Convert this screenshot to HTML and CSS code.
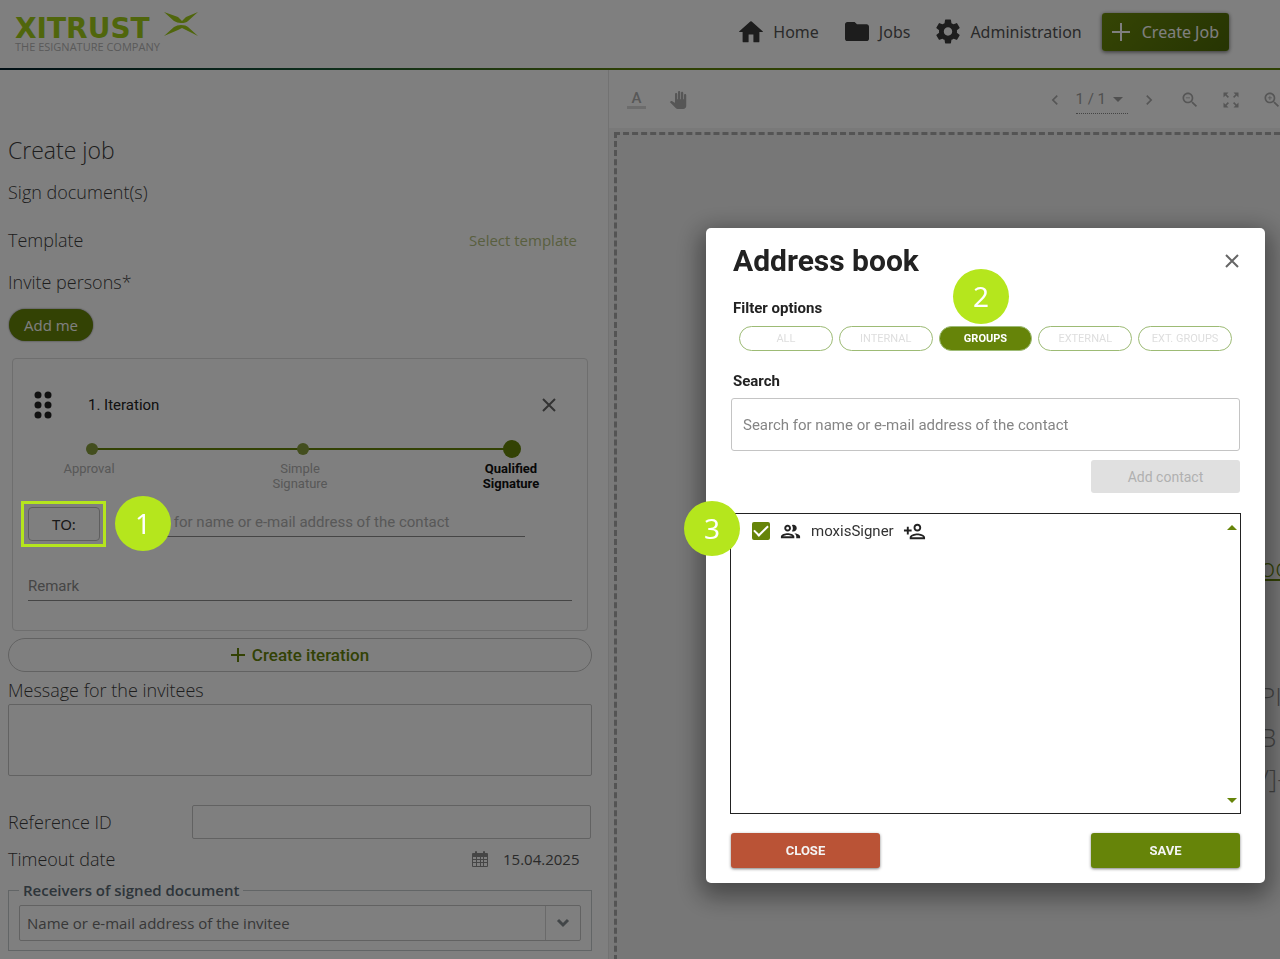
FILE: index.html
```html
<!DOCTYPE html>
<html lang="en">
<head>
    <meta charset="UTF-8">
    <meta name="viewport" content="width=device-width, initial-scale=1.0">
    <title>Create job - Address book</title>
    <link rel="stylesheet" href="styles.css">
</head>
<body>
    <header>
        <a href="#" class="logo">
            <span class="logo-name">XITRUST</span>
            <svg class="logo-mark" viewBox="0 0 34 24" aria-hidden="true">
                <path d="M0 0 L14 5 L18 9 L22 5 L34 0 L24 9 Q22 11 17 11 Q13 11 10 9 Z"/>
                <path d="M0 24 L10 15 Q13 13 17 13 Q22 13 24 15 L34 24 L22 18 L18 16 L14 18 Z"/>
            </svg>
            <span class="logo-claim">THE ESIGNATURE COMPANY</span>
        </a>
        <nav>
            <a href="#" class="nav-home">
                <svg viewBox="2 2 20 19"><path d="M10 20v-6h4v6q0 .5.5.5h3.800q.7 0 .7-.7V12h2.500q.8-.1.200-.700L12.600 3.200q-.6-.5-1.200 0L2.300 11.300q-.6.6.2.700H5v7.800q0 .7.7.7h3.800q.5 0 .5-.5z"/></svg>
                Home
            </a>
            <a href="#" class="nav-jobs">
                <svg viewBox="2 3 20 18"><path d="M10 4H4c-1.100 0-2 .9-2 2v12c0 1.100.9 2 2 2h16c1.100 0 2-.9 2-2V8c0-1.100-.9-2-2-2h-8l-2-2z"/></svg>
                Jobs
            </a>
            <a href="#" class="nav-admin">
                <svg viewBox="2 2 20 20"><path d="M19.430 12.980c.04-.32.07-.64.07-.98s-.03-.66-.07-.98l2.110-1.650c.19-.15.24-.42.12-.64l-2-3.460c-.12-.22-.39-.3-.61-.22l-2.490 1c-.52-.4-1.080-.73-1.690-.98l-.38-2.650C14.460 2.180 14.250 2 14 2h-4c-.25 0-.46.18-.49.42l-.38 2.650c-.61.25-1.170.59-1.690.98l-2.490-1c-.23-.09-.49 0-.61.22l-2 3.460c-.13.22-.07.49.12.64l2.110 1.650c-.04.32-.07.65-.07.98s.03.66.07.98l-2.110 1.650c-.19.15-.24.42-.12.64l2 3.460c.12.22.39.3.61.22l2.490-1c.52.4 1.080.73 1.690.98l.38 2.650c.03.24.24.42.49.42h4c.25 0 .46-.18.49-.42l.38-2.650c.61-.25 1.170-.59 1.690-.98l2.490 1c.23.09.49 0 .61-.22l2-3.460c.12-.22.07-.49-.12-.64l-2.110-1.650zM12 15.500c-1.930 0-3.500-1.570-3.500-3.500s1.570-3.500 3.500-3.500 3.500 1.570 3.500 3.500-1.570 3.500-3.500 3.500z"/></svg>
                Administration
            </a>
            <button type="button" class="create-job">
                <svg viewBox="0 0 18 18"><path d="M8 0h2v8h8v2h-8v8H8v-8H0V8h8z"/></svg>
                Create Job
            </button>
        </nav>
    </header>

    <main>
        <form class="job-form">
            <h1>Create job</h1>
            <h2>Sign document(s)</h2>
            <div class="form-row">
                <span class="label">Template</span>
                <button type="button" class="select-template">Select template</button>
            </div>
            <div class="form-row">
                <span class="label">Invite persons*</span>
            </div>
            <button type="button" class="add-me">Add me</button>

            <section class="iteration">
                <div class="iteration-head">
                    <svg class="drag-handle" viewBox="0 0 18 28">
                        <circle cx="4" cy="4" r="3.500"/><circle cx="14" cy="4" r="3.500"/>
                        <circle cx="4" cy="14" r="3.500"/><circle cx="14" cy="14" r="3.500"/>
                        <circle cx="4" cy="24" r="3.500"/><circle cx="14" cy="24" r="3.500"/>
                    </svg>
                    <span>1. Iteration</span>
                    <button type="button" class="icon-button" aria-label="Remove iteration">
                        <svg viewBox="0 0 14 14"><path d="M1 1l12 12M13 1L1 13"/></svg>
                    </button>
                </div>
                <ol class="stepper">
                    <li>Approval</li>
                    <li>Simple<br>Signature</li>
                    <li class="active">Qualified<br>Signature</li>
                </ol>
                <div class="to-row">
                    <div class="to-box">
                        <button type="button" class="to-button">TO:</button>
                        <span class="badge badge-1">1</span>
                    </div>
                    <input type="text" class="line-input" aria-label="Recipient" placeholder="Search for name or e-mail address of the contact">
                </div>
                <input type="text" class="line-input remark" aria-label="Remark" placeholder="Remark">
            </section>

            <button type="button" class="create-iteration">
                <svg viewBox="0 0 14 14"><path d="M6 0h2v6h6v2H8v6H6V8H0V6h6z"/></svg>
                Create iteration
            </button>

            <label class="label message-label" for="message">Message for the invitees</label>
            <textarea id="message"></textarea>

            <div class="reference-row">
                <label class="label" for="reference">Reference ID</label>
                <input type="text" id="reference">
            </div>
            <div class="timeout-row">
                <label class="label" for="timeout">Timeout date</label>
                <svg viewBox="0 0 16 16">
                    <path fill-rule="evenodd" d="M1 2h2V1q0-1 1-1t1 1v1h6V1q0-1 1-1t1 1v1h2q1 0 1 1v12q0 1-1 1H1q-1 0-1-1V3q0-1 1-1zM1 6v2h3V6zM5 6v2h3V6zM9 6v2h2V6zM12 6v2h3V6zM1 9v2h3V9zM5 9v2h3V9zM9 9v2h2V9zM12 9v2h3V9zM1 12v3h3v-3zM5 12v3h3v-3zM9 12v3h2v-3zM12 12v3h3v-3z"/>
                </svg>
                <input type="text" id="timeout" value="15.04.2025">
            </div>

            <fieldset>
                <legend>Receivers of signed document</legend>
                <div class="select-box">
                    <select aria-label="Receivers of signed document">
                        <option>Name or e-mail address of the invitee</option>
                    </select>
                    <span class="select-arrow"><svg viewBox="0 0 14 10"><path d="M2 2l5 5 5-5"/></svg></span>
                </div>
            </fieldset>
        </form>

        <section class="viewer">
            <div class="toolbar">
                <button type="button" class="tool-text">A</button>
                <button type="button" class="tool tool-pan" aria-label="Pan">
                    <svg viewBox="0 0 24 24"><path d="M23 5.500V20c0 2.200-1.800 4-4 4h-7.300c-1.080 0-2.100-.43-2.850-1.190L1 14.830s1.260-1.230 1.300-1.250c.22-.19.49-.29.79-.29.22 0 .42.06.6.16.04.01 4.310 2.460 4.310 2.460V4c0-.83.67-1.500 1.500-1.500S11 3.170 11 4v7h1V1.500c0-.83.67-1.500 1.500-1.500S15 .67 15 1.500V11h1V2.500c0-.83.67-1.500 1.500-1.500s1.500.67 1.500 1.500V11h1V5.500c0-.83.67-1.500 1.500-1.500s1.500.67 1.500 1.500z"/></svg>
                </button>
                <div class="pager">
                    <button type="button" class="tool" aria-label="Previous page">
                        <svg viewBox="0 0 24 24"><path d="M15.400 7.400L14 6l-6 6 6 6 1.400-1.400L10.800 12z"/></svg>
                    </button>
                    <button type="button" class="page-number">1 / 1 <svg viewBox="0 0 10 5"><path d="M0 0h10L5 5z"/></svg></button>
                    <button type="button" class="tool" aria-label="Next page">
                        <svg viewBox="0 0 24 24"><path d="M10 6L8.600 7.400l4.600 4.600-4.600 4.600L10 18l6-6z"/></svg>
                    </button>
                </div>
                <button type="button" class="tool" aria-label="Zoom out">
                    <svg viewBox="0 0 24 24"><path d="M15.500 14h-.79l-.28-.27C15.410 12.590 16 11.110 16 9.500 16 5.910 13.090 3 9.500 3S3 5.910 3 9.500 5.910 16 9.500 16c1.610 0 3.090-.59 4.230-1.570l.27.28v.79l5 4.990L20.490 19l-4.990-5zm-6 0C7.010 14 5 11.990 5 9.500S7.010 5 9.500 5 14 7.010 14 9.500 11.990 14 9.500 14zM7 9h5v1H7z"/></svg>
                </button>
                <button type="button" class="tool" aria-label="Fit page">
                    <svg viewBox="0 0 24 24"><path d="M15 3l2.300 2.300-2.890 2.870 1.420 1.420L18.700 6.700 21 9V3zM3 9l2.300-2.300 2.870 2.890 1.420-1.420L6.700 5.300 9 3H3zm6 12l-2.300-2.300 2.890-2.870-1.420-1.420L5.300 17.300 3 15v6zm12-6l-2.300 2.300-2.870-2.890-1.420 1.420 2.890 2.870L15 21h6z"/></svg>
                </button>
                <button type="button" class="tool" aria-label="Zoom in">
                    <svg viewBox="0 0 24 24"><path d="M15.500 14h-.79l-.28-.27C15.410 12.590 16 11.110 16 9.500 16 5.910 13.090 3 9.500 3S3 5.910 3 9.500 5.910 16 9.500 16c1.610 0 3.090-.59 4.230-1.570l.27.28v.79l5 4.990L20.490 19l-4.990-5zm-6 0C7.010 14 5 11.990 5 9.500S7.010 5 9.500 5 14 7.010 14 9.500 11.990 14 9.500 14zM12 10h-2v2H9v-2H7V9h2V7h1v2h2z"/></svg>
                </button>
            </div>
            <div class="drop-area">
                <div class="document">
                    <a href="#">oo</a>
                    <p>PI</p>
                    <p>B</p>
                    <p>/]-</p>
                </div>
            </div>
        </section>
    </main>

    <div class="backdrop"></div>

    <div class="modal" role="dialog" aria-labelledby="modalTitle">
        <div class="modal-head">
            <h2 id="modalTitle">Address book</h2>
            <button type="button" class="icon-button" aria-label="Close dialog">
                <svg viewBox="0 0 14 14"><path d="M1 1l12 12M13 1L1 13"/></svg>
            </button>
        </div>
        <h3>Filter options</h3>
        <div class="filters">
            <button type="button">ALL</button>
            <button type="button">INTERNAL</button>
            <button type="button" class="active">GROUPS</button>
            <button type="button">EXTERNAL</button>
            <button type="button">EXT. GROUPS</button>
        </div>
        <label class="search-label" for="search">Search</label>
        <input type="text" id="search" class="search" placeholder="Search for name or e-mail address of the contact">
        <button type="button" class="add-contact" disabled>Add contact</button>
        <div class="contacts">
            <div class="contact">
                <input type="checkbox" id="contact1" checked>
                <svg viewBox="0 0 24 24"><path d="M9 13.750c-2.340 0-7 1.170-7 3.500V19h14v-1.750c0-2.330-4.660-3.500-7-3.500zM4.340 17c.84-.58 2.870-1.250 4.660-1.250s3.820.67 4.660 1.250H4.340zM9 12c1.930 0 3.500-1.570 3.500-3.500S10.930 5 9 5 5.500 6.570 5.500 8.500 7.070 12 9 12zm0-5c.83 0 1.500.67 1.500 1.500S9.830 10 9 10s-1.500-.67-1.500-1.500S8.170 7 9 7zm7.040 6.810c1.160.84 1.960 1.960 1.960 3.440V19h4v-1.750c0-2.020-3.500-3.170-5.960-3.440zM15 12c1.930 0 3.500-1.570 3.500-3.500S16.930 5 15 5c-.54 0-1.040.13-1.500.35.63.89 1 1.980 1 3.150s-.37 2.260-1 3.150c.46.22.96.35 1.500.35z"/></svg>
                <label for="contact1">moxisSigner</label>
                <svg viewBox="0 0 24 24"><path d="M15 12c2.210 0 4-1.790 4-4s-1.790-4-4-4-4 1.790-4 4 1.790 4 4 4zm0-6c1.100 0 2 .9 2 2s-.9 2-2 2-2-.9-2-2 .9-2 2-2zm0 8c-2.670 0-8 1.340-8 4v2h16v-2c0-2.660-5.330-4-8-4zm-6 4c.22-.72 3.310-2 6-2 2.700 0 5.800 1.290 6 2H9zm-3-3v-3h3v-2H6V7H4v3H1v2h3v3z"/></svg>
            </div>
            <div class="scroll-arrows">
                <svg viewBox="0 0 10 5"><path d="M0 5h10L5 0z"/></svg>
                <svg viewBox="0 0 10 5"><path d="M0 0h10L5 5z"/></svg>
            </div>
        </div>
        <div class="modal-actions">
            <button type="button" class="close">CLOSE</button>
            <button type="button" class="save">SAVE</button>
        </div>
        <span class="badge badge-2">2</span>
        <span class="badge badge-3">3</span>
    </div>
</body>
</html>
```

FILE: styles.css
```css
* {
    box-sizing: border-box;
}

body {
    margin: 0;
    min-height: 100vh;
    display: flex;
    flex-direction: column;
    overflow: hidden;
    font-family: 'Open Sans', sans-serif;
    color: #3c3c3c;
    background-color: #fff;
}

h1, h2, h3, p, ol {
    margin: 0;
    padding: 0;
}

button, input, select, textarea {
    font-family: inherit;
    margin: 0;
}

button {
    cursor: pointer;
    padding: 0;
    border: none;
    background: none;
}

svg {
    display: block;
    flex: none;
    fill: currentColor;
}

/* Header */
header {
    height: 70px;
    padding: 0 51px 5px 15px;
    display: flex;
    align-items: center;
    justify-content: space-between;
    border-bottom: 2px solid;
    border-image: linear-gradient(to right, #04202c, #1b5a38 25%, #5e8209 50%, #5e8209) 1;
}

.logo {
    display: grid;
    grid-template-columns: auto 1fr;
    gap: 3px 14px;
    align-items: end;
    text-decoration: none;
}

.logo-name {
    font-family: 'DejaVu Sans', sans-serif;
    font-weight: bold;
    font-size: 28px;
    line-height: 20px;
    color: #a0cc18;
}

.logo-mark {
    width: 34px;
    height: 24px;
    margin-bottom: 3px;
    fill: #a0cc18;
}

.logo-claim {
    grid-column: 1 / 3;
    font-family: 'Open Sans', sans-serif;
    font-size: 11px;
    line-height: 10px;
    color: #b4b4b4;
}

nav {
    display: flex;
    align-items: center;
    gap: 26px;
    font-family: 'Noto Sans', sans-serif;
    font-size: 16px;
}

nav a {
    display: flex;
    align-items: center;
    gap: 10px;
    color: #545454;
    text-decoration: none;
}

nav a svg {
    width: 24px;
    height: 25px;
    color: #3a3a3a;
}

.create-job {
    display: flex;
    align-items: center;
    gap: 12px;
    height: 38px;
    margin-left: -6px;
    padding: 0 10px;
    border-radius: 3px;
    background: linear-gradient(135deg, #6b8a0a, #4d6906);
    box-shadow: 0 1px 4px rgba(0, 0, 0, 0.6);
    color: #fff;
    font-size: 16px;
}

.create-job svg {
    width: 18px;
    height: 18px;
}

/* Job form */
main {
    flex: 1;
    display: flex;
}

.job-form {
    flex: none;
    width: 608px;
    padding: 62px 16px 0 8px;
    display: flex;
    flex-direction: column;
}

.job-form h1 {
    font-size: 23px;
    line-height: 36px;
    font-weight: 300;
}

.job-form h2 {
    margin-top: 12px;
    font-size: 18px;
    line-height: 24px;
    font-weight: 300;
}

.label {
    font-size: 18px;
    line-height: 24px;
    font-weight: 300;
}

.form-row {
    margin-top: 18px;
    padding-right: 15px;
    display: flex;
    justify-content: space-between;
}

.form-row:first-of-type {
    margin-top: 24px;
}

.select-template {
    font-size: 15px;
    color: #b3bf80;
}

.add-me {
    align-self: flex-start;
    width: 84px;
    height: 32px;
    margin: 15px 0 0 1px;
    border-radius: 16px;
    background-color: #668409;
    box-shadow: 0 0 2px rgba(0, 0, 0, 0.6);
    color: #fff;
    font-size: 15px;
}

.iteration {
    margin: 17px 4px 0;
    padding: 28px 15px 29px;
    border: 1px solid #dcdcdc;
    border-radius: 4px;
    display: flex;
    flex-direction: column;
    font-family: Roboto, sans-serif;
}

.iteration-head {
    display: flex;
    align-items: center;
    padding: 0 16px 0 6px;
    height: 36px;
    font-size: 15px;
    color: #222;
}

.drag-handle {
    width: 18px;
    height: 28px;
    margin-right: 36px;
    color: #222;
}

.icon-button {
    margin-left: auto;
    color: #666;
}

.icon-button svg {
    width: 14px;
    height: 14px;
    fill: none;
    stroke: currentColor;
    stroke-width: 2;
}

.stepper {
    display: flex;
    justify-content: space-between;
    margin: 17px 25px 0 25px;
    list-style: none;
    font-size: 13px;
    line-height: 15px;
    text-align: center;
    color: #b0b0b0;
}

.stepper li {
    position: relative;
    width: 72px;
    padding-top: 21px;
}

/* connecting line and dot */
.stepper li + li::before {
    content: '';
    position: absolute;
    top: 8px;
    right: 36px;
    width: 212px;
    height: 2px;
    background-color: #668409;
}

.stepper li::after {
    content: '';
    position: absolute;
    z-index: 1;
    top: 3px;
    left: 33px;
    width: 12px;
    height: 12px;
    border-radius: 50%;
    background-color: #869c3c;
}

.stepper li.active {
    font-weight: bold;
    color: #111;
}

.stepper li.active::after {
    top: 0;
    left: 28px;
    width: 18px;
    height: 18px;
    background-color: #668409;
}

.to-row {
    display: flex;
    gap: 24px;
    margin: 16px 47px 0 0;
}

.to-box {
    position: relative;
}

.to-box::after {
    content: '';
    position: absolute;
    z-index: 20;
    inset: -6px -6px -6px -7px;
    border: 3px solid #b5e61d;
    pointer-events: none;
}

.to-button {
    width: 72px;
    height: 34px;
    border: 1px solid #bdbdbd;
    border-radius: 4px;
    font-family: 'Noto Sans', sans-serif;
    font-size: 15px;
    color: #333;
}

.line-input {
    flex: 1;
    min-width: 0;
    height: 30px;
    padding: 0;
    border: none;
    border-bottom: 1px solid #8a8a8a;
    background: none;
    font-size: 15px;
    color: #333;
}

.line-input::placeholder {
    color: #b0b0b0;
    opacity: 1;
}

.line-input.remark {
    flex: none;
    margin-top: 30px;
}

.line-input.remark::placeholder {
    color: #8c8c8c;
}

.create-iteration {
    display: flex;
    align-items: center;
    justify-content: center;
    gap: 7px;
    height: 34px;
    margin-top: 7px;
    border: 1px solid #c4c4c4;
    border-radius: 17px;
    font-family: Roboto, sans-serif;
    font-weight: 500;
    font-size: 17px;
    color: #668409;
}

.create-iteration svg {
    width: 14px;
    height: 14px;
}

.message-label {
    margin-top: 6px;
}

textarea {
    height: 72px;
    margin-top: 2px;
    border: 1px solid #c4c4c4;
    border-radius: 2px;
    background: none;
    resize: none;
}

.reference-row {
    display: grid;
    grid-template-columns: 184px 1fr;
    align-items: center;
    margin-top: 29px;
}

.reference-row input {
    height: 34px;
    margin-right: 1px;
    border: 1px solid #c4c4c4;
    border-radius: 2px;
    background: none;
}

.timeout-row {
    display: flex;
    align-items: center;
    margin-top: 8px;
    padding-right: 9px;
}

.timeout-row svg {
    width: 16px;
    height: 16px;
    margin: 0 15px 0 auto;
    color: #8c8c8c;
}

.timeout-row input {
    width: 80px;
    padding: 0;
    border: none;
    background: none;
    font-size: 15px;
    color: #555;
}

fieldset {
    margin: 9px 0 0;
    padding: 5px 10px 9px;
    min-width: 0;
    border: 1px solid #c4cacc;
}

legend {
    padding: 0 4px;
    font-size: 15px;
    line-height: 20px;
    font-weight: 600;
    color: #5b6a74;
}

.select-box {
    display: flex;
    height: 36px;
    border: 1px solid #c4c4c4;
    border-radius: 2px;
}

.select-box select {
    flex: 1;
    min-width: 0;
    padding: 0 7px;
    border: none;
    background: none;
    appearance: none;
    font-size: 15px;
    color: #707070;
}

.select-arrow {
    display: flex;
    align-items: center;
    padding: 0 10px;
    border-left: 1px solid #d4d4d4;
}

.select-arrow svg {
    width: 14px;
    height: 10px;
    fill: none;
    stroke: #848c90;
    stroke-width: 3;
}

/* Viewer */
.viewer {
    flex: 1;
    min-width: 0;
    display: flex;
    flex-direction: column;
    overflow: hidden;
    border-left: 1px solid #e4e4e4;
    background-color: #f2f2f2;
}

.toolbar {
    display: flex;
    align-items: center;
    gap: 21px;
    height: 58px;
    margin-right: -2px;
    padding: 1px 0 0 18px;
    background-color: #fff;
    color: #a8a8a8;
}

.tool-text {
    width: 19px;
    height: 18px;
    margin-right: 2px;
    border-bottom: 3px solid #d8d8d8;
    font-family: Roboto, sans-serif;
    font-weight: 500;
    font-size: 15px;
    line-height: 15px;
    color: #b0b0b0;
}

.tool {
    color: #acacac;
}

.tool svg {
    width: 20px;
    height: 20px;
}

.tool-pan svg {
    width: 18px;
}

.pager {
    display: flex;
    align-items: center;
    gap: 11px;
    margin-left: auto;
}

.page-number {
    display: flex;
    align-items: center;
    gap: 7px;
    height: 29px;
    padding: 0 5px 0 0;
    border-bottom: 1px dotted #888;
    font-family: Roboto, sans-serif;
    font-size: 15px;
    color: #a0a0a0;
}

.page-number svg {
    width: 10px;
    height: 5px;
}

.drop-area {
    flex: 1;
    display: flex;
    justify-content: flex-end;
    margin: 4px 0 -20px 5px;
    border: 3px dashed #a8a8a8;
    border-right: none;
    background-color: #efefef;
}

.document {
    width: 20px;
    padding-top: 412px;
    font-size: 26px;
    line-height: 41px;
    font-weight: 300;
    white-space: nowrap;
    color: #888;
}

.document a {
    display: block;
    margin-bottom: 88px;
    color: #668409;
}

/* Address book */
.backdrop {
    position: fixed;
    inset: 0;
    z-index: 10;
    background-color: rgba(0, 0, 0, 0.5);
}

.modal {
    position: fixed;
    z-index: 30;
    top: 228px;
    right: 15px;
    width: 559px;
    padding: 12px 25px 15px;
    display: flex;
    flex-direction: column;
    border-radius: 5px;
    background-color: #fff;
    box-shadow: 0 8px 24px 6px rgba(0, 0, 0, 0.4);
    font-family: Roboto, sans-serif;
    color: #222;
}

.modal-head {
    display: flex;
    align-items: center;
    padding: 0 1px 0 2px;
}

.modal-head h2 {
    font-size: 30px;
    line-height: 42px;
}

.modal h3, .search-label {
    padding-left: 2px;
    font-size: 15px;
    line-height: 20px;
    font-weight: bold;
}

.modal h3 {
    margin-top: 16px;
}

.filters {
    display: grid;
    grid-template-columns: repeat(5, 1fr);
    gap: 6px;
    margin: 8px 8px 0;
}

.filters button {
    height: 25px;
    border: 1px solid #9dbb75;
    border-radius: 13px;
    font-size: 11px;
    color: #dedede;
}

.filters .active {
    background-color: #668409;
    font-weight: bold;
    color: #fff;
}

.search-label {
    margin-top: 20px;
}

.search {
    height: 53px;
    margin-top: 7px;
    padding: 0 11px;
    border: 1px solid #c4c4c4;
    border-radius: 3px;
    font-size: 15px;
    color: #222;
}

.search::placeholder {
    color: #858585;
    opacity: 1;
}

.add-contact {
    align-self: flex-end;
    width: 149px;
    height: 33px;
    margin-top: 9px;
    border-radius: 3px;
    background-color: #e0e0e0;
    font-size: 14px;
    color: #b0b0b0;
}

.contacts {
    display: flex;
    justify-content: space-between;
    height: 301px;
    margin: 20px -1px 0;
    padding: 6px 3px 8px 21px;
    border: 1px solid #222;
}

.contact {
    display: flex;
    align-items: center;
    gap: 9px;
    height: 22px;
    font-size: 15px;
    color: #333;
}

.contact svg {
    width: 23px;
    height: 23px;
    color: #222;
}

.contact input {
    appearance: none;
    width: 18px;
    height: 18px;
    margin: 0;
    border-radius: 2px;
    background-color: #668409;
    display: grid;
    place-items: center;
}

.contact input:checked::after {
    content: '';
    width: 12px;
    height: 6px;
    margin-bottom: 4px;
    border: solid #fff;
    border-width: 0 0 2px 2px;
    transform: rotate(-45deg);
}

.scroll-arrows {
    display: flex;
    flex-direction: column;
    justify-content: space-between;
    padding: 5px 0 2px;
    color: #668409;
}

.scroll-arrows svg {
    width: 10px;
    height: 5px;
}

.modal-actions {
    display: flex;
    justify-content: space-between;
    margin-top: 19px;
}

.modal-actions button {
    width: 149px;
    height: 35px;
    border-radius: 3px;
    box-shadow: 0 1px 3px rgba(0, 0, 0, 0.5);
    font-weight: bold;
    font-size: 13px;
    color: #f4f4f4;
}

.modal-actions .close {
    background-color: #ba5336;
}

.modal-actions .save {
    background-color: #668409;
}

/* Numbered markers */
.badge {
    position: absolute;
    z-index: 40;
    width: 56px;
    height: 55px;
    border-radius: 50%;
    background-color: #b5e61d;
    font-family: 'Noto Sans', sans-serif;
    font-size: 28px;
    line-height: 54px;
    text-align: center;
    color: #fff;
}

.badge-1 {
    top: -11px;
    left: 87px;
}

.badge-2 {
    top: 41px;
    left: 247px;
}

.badge-3 {
    top: 273px;
    left: -22px;
}
```
